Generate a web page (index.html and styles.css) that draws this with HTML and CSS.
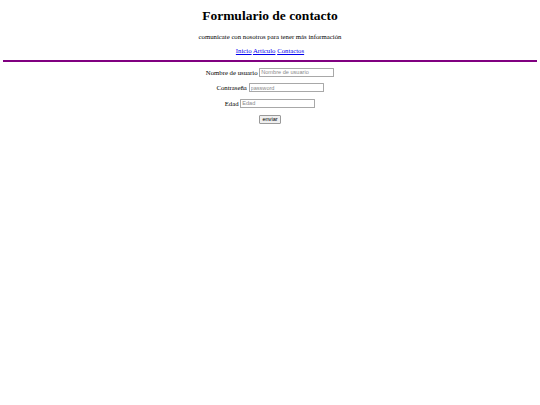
FILE: index.html
```html
<!DOCTYPE html>
<html lang="es">
<head>
<meta charset="utf-8">
<title>Formulario de contacto</title>
<link rel="stylesheet" href="styles.css">
</head>
<body>
<header class="header">
  <h1 class="title">Formulario de contacto</h1>
  <p class="subtitle">comunícate con nosotros para tener más información</p>
  <nav class="nav"><a href="#">Inicio</a> <a href="#">Artículo</a> <a href="#">Contactos</a></nav>
</header>
<hr class="divider">
<form class="form">
  <p class="row"><label for="u">Nombre de usuario</label><input id="u" class="field" type="text" placeholder="Nombre de usuario"></p>
  <p class="row"><label for="p">Contraseña</label><input id="p" class="field" type="password" placeholder="password"></p>
  <p class="row"><label for="e">Edad</label><input id="e" class="field" type="text" placeholder="Edad"></p>
  <p class="row"><button class="send" type="button">enviar</button></p>
</form>
</body>
</html>
```
FILE: styles.css
```css
body {
  margin: 3.4px;
  font-family: "Liberation Serif", serif;
  font-size: 6.75px;
  color: #000;
  background: #fff;
}
.header {
  text-align: center;
}
.title {
  font-size: 13.5px;
  margin: 4.6px 0 9px;
}
.subtitle {
  margin: 6.75px 0;
}
.nav {
  margin: 6.75px 0 6px;
}
.nav a {
  color: #0000ee;
}
.divider {
  height: 0;
  border: 1.3px solid #800080;
  margin: 3px 0;
}
.form {
  display: flex;
  flex-direction: column;
  align-items: center;
  gap: 6.7px;
  padding-top: 2.8px;
}
.row {
  display: flex;
  align-items: center;
  gap: 1.7px;
  height: 9px;
  margin: 0;
}
.field {
  box-sizing: border-box;
  width: 75px;
  height: 9px;
  padding: 0 1px;
  font-family: "Liberation Sans", sans-serif;
  font-size: 5.6px;
  border: 0.6px solid #a8a8a8;
  border-radius: 0.5px;
}
.field::placeholder {
  color: #8a8a8a;
}
.send {
  height: 9px;
  padding: 0 2.5px;
  font-family: "Liberation Sans", sans-serif;
  font-size: 5.6px;
  color: #000;
  background: #efefef;
  border: 0.6px solid #9a9a9a;
  border-radius: 1px;
}
```
